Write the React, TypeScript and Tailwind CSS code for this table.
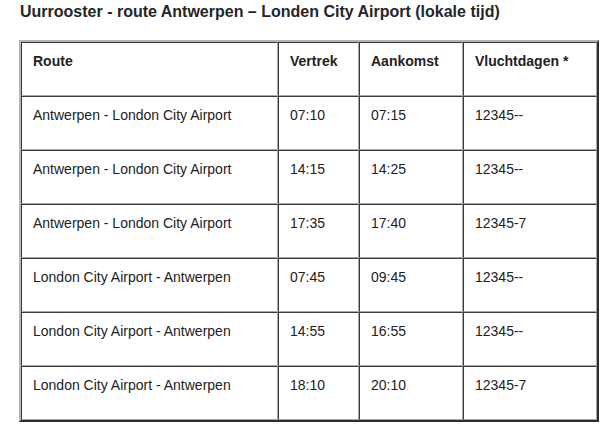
const rows = [
  ['Antwerpen - London City Airport', '07:10', '07:15', '12345--'],
  ['Antwerpen - London City Airport', '14:15', '14:25', '12345--'],
  ['Antwerpen - London City Airport', '17:35', '17:40', '12345-7'],
  ['London City Airport - Antwerpen', '07:45', '09:45', '12345--'],
  ['London City Airport - Antwerpen', '14:55', '16:55', '12345--'],
  ['London City Airport - Antwerpen', '18:10', '20:10', '12345-7'],
]

const cell =
  'border border-t-[#3a3a3a] border-l-[#3a3a3a] border-r-[#a8a8a8] border-b-[#a8a8a8] pl-[11px] pr-2 pt-[10px] pb-[26px] text-left align-top leading-4'

export default function App() {
  return (
    <div className="w-[614px] h-[435px] bg-white text-[#222] font-['Liberation_Sans',Arial,sans-serif] text-[14px]">
      <h1 className="pl-[20px] pt-[3px] text-[16px] font-bold leading-[18px] text-[#262626]">
        Uurrooster - route Antwerpen – Londen City Airport (lokale tijd)
      </h1>
      <table className="ml-[19px] mt-[19px] w-[580px] table-fixed border-separate border-spacing-0 border-2 border-t-[#b4b4b4] border-l-[#b4b4b4] border-r-[#2c2c2c] border-b-[#2c2c2c]">
        <colgroup>
          <col className="w-[257px]" />
          <col className="w-[81px]" />
          <col className="w-[104px]" />
          <col className="w-[134px]" />
        </colgroup>
        <thead>
          <tr>
            <th className={`${cell} font-bold`}>Route</th>
            <th className={`${cell} font-bold`}>Vertrek</th>
            <th className={`${cell} font-bold`}>Aankomst</th>
            <th className={`${cell} font-bold`}>Vluchtdagen *</th>
          </tr>
        </thead>
        <tbody>
          {rows.map((r, i) => (
            <tr key={i}>
              {r.map((v, j) => (
                <td key={j} className={cell}>
                  {v}
                </td>
              ))}
            </tr>
          ))}
        </tbody>
      </table>
    </div>
  )
}
